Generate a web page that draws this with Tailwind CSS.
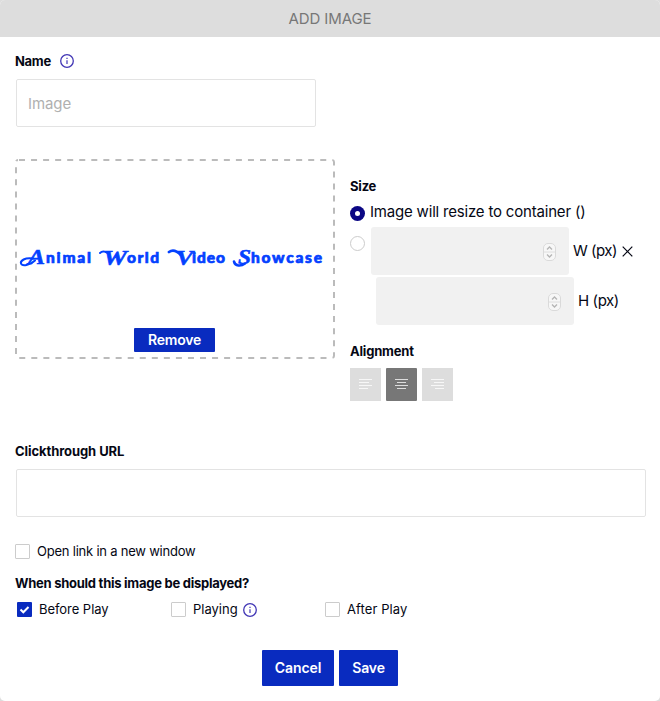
<!DOCTYPE html>
<html lang="en">
<head>
<meta charset="utf-8">
<title>Add Image</title>
<script src="https://cdn.jsdelivr.net/npm/@tailwindcss/browser@4"></script>
</head>
<body class="bg-[#dddddd] font-['Inter',sans-serif] text-[#050714]">
<svg class="hidden">
  <symbol id="info" viewBox="0 0 14 14"><circle cx="7" cy="7" r="6.3" fill="none" stroke="#4136b5" stroke-width="1.3"/><path d="M7 6.2V10M7 3.8V5" stroke="#4136b5" stroke-width="1.2"/></symbol>
  <symbol id="spin" viewBox="0 0 13 18"><rect x=".5" y=".5" width="12" height="17" rx="4.5" fill="#f7f7f7" stroke="#dadada"/><path d="M1 9h11" stroke="#dedede"/><path d="M4 6.5 6.5 4 9 6.5M4 11.5 6.5 14 9 11.5" fill="none" stroke="#b5b5b5" stroke-width="1.3"/></symbol>
</svg>
<div class="flex h-[701px] w-[660px] flex-col overflow-hidden rounded-[5px] bg-white">
  <header class="flex h-[37px] shrink-0 items-center justify-center bg-[#dddddd] pt-[2px] text-[15px] tracking-[-0.1px] text-[#777]">ADD IMAGE</header>

  <div class="mt-4 flex h-4 items-center pl-[15px]">
    <span class="pt-[2px] text-[13px] font-bold tracking-[-0.3px]">Name</span>
    <svg class="ml-[9px] size-[14px]"><use href="#info"/></svg>
  </div>
  <div class="mt-[10px] ml-4 flex h-12 w-[300px] shrink-0 items-center rounded-[2px] border border-[#e3e3e3] pt-[2px] pl-[11px] text-[15px] tracking-[-0.1px] text-[#b0b0b0]">Image</div>

  <div class="mt-8 flex h-[242px] shrink-0 pl-[15px]">
    <div class="relative flex h-[200px] w-[320px] flex-col items-center justify-end pb-[7px]">
      <svg class="absolute inset-0" width="320" height="200"><rect x="1" y="1" width="318" height="198" rx="2" fill="none" stroke="#bbbbbb" stroke-width="2" stroke-dasharray="6 6.05" stroke-dashoffset="-1"/></svg>
      <svg class="absolute top-[84px] left-0" width="320" height="32" fill="#0441ff" stroke="#0441ff">
        <g font-family="Lato, sans-serif" font-weight="900" font-size="15.5" stroke-width=".7">
          <text x="31" y="19.5" textLength="45" lengthAdjust="spacing">nimal</text>
          <text x="112" y="19.5" textLength="32" lengthAdjust="spacing">orld</text>
          <text x="177" y="19.5" textLength="33" lengthAdjust="spacing">ideo</text>
          <text x="236" y="19.5" textLength="71" lengthAdjust="spacing">howcase</text>
        </g>
        <g font-family="Liberation Serif, serif" font-style="italic" font-weight="700" font-size="20" stroke-width=".5">
          <text x="13" y="21" textLength="17" lengthAdjust="spacingAndGlyphs">A</text>
          <text x="88" y="22" textLength="24" lengthAdjust="spacingAndGlyphs">W</text>
          <text x="161" y="22" textLength="17" lengthAdjust="spacingAndGlyphs">V</text>
          <text x="223" y="21" textLength="13" lengthAdjust="spacingAndGlyphs">S</text>
        </g>
        <g fill="none" stroke-width="2" stroke-linecap="round">
          <path d="M18 15.5C10 14 5 18 6 20.5c1 3 9 2 14-3"/>
          <path d="M85 10c3-3 6-1 9 1"/>
          <path d="M154 9c4-3 9 0 12 3" stroke-width="2.8"/>
          <path d="M219 18.5c1 5 7 5 11 2" stroke-width="2.6"/>
        </g>
      </svg>
      <button class="relative mr-px h-6 w-[81px] rounded-[1px] bg-[#092bbf] text-[14px] leading-[22px] font-semibold tracking-[-0.2px] text-white">Remove</button>
    </div>
    <div class="ml-[15px] flex flex-col">
      <div class="mt-[19px] h-4 text-[13px] leading-4 font-bold tracking-[-0.2px]">Size</div>
      <div class="mt-[8px] flex h-5 items-center">
        <span class="mt-[3px] flex size-[15px] items-center justify-center rounded-full bg-[#0b0784]"><i class="size-[5px] rounded-full bg-white"></i></span>
        <span class="ml-[5px] text-[15px] tracking-[-0.19px] whitespace-nowrap">Image will resize to container ()</span>
      </div>
      <div class="mt-[5px] flex h-12">
        <span class="mt-[9px] size-[15px] rounded-full border border-[#cccccc]"></span>
        <span class="ml-[6px] flex w-[198px] items-center justify-end rounded-[3px] bg-[#f1f1f1] pr-[13px]"><svg class="mt-px h-[18px] w-[13px]"><use href="#spin"/></svg></span>
        <span class="ml-1 self-center text-[15px] tracking-[-0.5px]">W (px)</span>
        <svg class="ml-[5px] h-[11px] w-[11px] self-center" viewBox="0 0 11 11"><path d="m.7.7 9.6 9.6M10.3.7.7 10.3" stroke="#050714" stroke-width="1.2"/></svg>
      </div>
      <div class="mt-[2px] flex h-12 pl-[26px]">
        <span class="flex w-[198px] items-center justify-end rounded-[3px] bg-[#f1f1f1] pr-[13px]"><svg class="mt-px h-[18px] w-[13px]"><use href="#spin"/></svg></span>
        <span class="ml-1 self-center text-[15px] tracking-[-0.4px]">H (px)</span>
      </div>
      <div class="mt-[18px] h-4 text-[13px] leading-4 font-bold tracking-[-0.2px]">Alignment</div>
      <div class="mt-[9px] flex gap-[5px]">
        <span class="flex h-[33px] w-[31px] items-center justify-center bg-[#dddddd]"><svg width="13" height="10" stroke="#f7f7f7" class="-mt-[2px]"><path d="M0 .5h13M0 3.5h10M0 6.5h13M0 9.5h9"/></svg></span>
        <span class="flex h-[33px] w-[31px] items-center justify-center rounded-[1px] bg-[#777777]"><svg width="13" height="10" stroke="#dedede" class="-mt-[2px]"><path d="M0 .5h13M2 3.5h9M0 6.5h13M2 9.5h9"/></svg></span>
        <span class="flex h-[33px] w-[31px] items-center justify-center bg-[#dddddd]"><svg width="13" height="10" stroke="#f7f7f7" class="-mt-[2px]"><path d="M0 .5h13M3 3.5h10M0 6.5h13M4 9.5h9"/></svg></span>
      </div>
    </div>
  </div>

  <div class="mt-[42px] h-4 pl-[15px] text-[13px] leading-4 font-bold tracking-[-0.08px]">Clickthrough URL</div>
  <div class="mt-[10px] ml-4 h-12 w-[630px] shrink-0 rounded-[2px] border border-[#e3e3e3]"></div>
  <div class="mt-[27px] flex h-[15px] items-center pl-[15px] text-[13px]">
    <i class="size-[15px] rounded-[1px] border border-[#cccccc]"></i><span class="ml-[7px] tracking-[-0.22px]">Open link in a new window</span>
  </div>
  <div class="mt-[16px] h-4 pl-[15px] text-[13px] leading-4 font-bold tracking-[-0.26px]">When should this image be displayed?</div>
  <div class="mt-[11px] flex h-[15px] items-center pl-[17px] text-[13px]">
    <div class="flex w-[154px] items-center">
      <svg width="15" height="15"><rect width="15" height="15" rx="1" fill="#092bbf"/><path d="m3.5 7.5 2.8 2.8L11.5 5" fill="none" stroke="#fff" stroke-width="2"/></svg>
      <span class="ml-[7px] tracking-[-0.05px]">Before Play</span>
    </div>
    <div class="flex w-[154px] items-center">
      <i class="size-[15px] rounded-[1px] border border-[#cccccc]"></i><span class="ml-[7px]">Playing</span><svg class="ml-[5px] size-[14px]"><use href="#info"/></svg>
    </div>
    <div class="flex items-center">
      <i class="size-[15px] rounded-[1px] border border-[#cccccc]"></i><span class="ml-[7px] tracking-[0.1px]">After Play</span>
    </div>
  </div>
  <div class="mt-[33px] flex justify-center gap-[5px] text-[14px] font-semibold text-white">
    <button class="h-9 w-[72px] rounded-[1px] bg-[#092bbf] pb-[2px] tracking-[-0.1px]">Cancel</button>
    <button class="h-9 w-[59px] rounded-[1px] bg-[#092bbf] pb-[2px] tracking-[-0.1px]">Save</button>
  </div>
</div>
</body>
</html>
